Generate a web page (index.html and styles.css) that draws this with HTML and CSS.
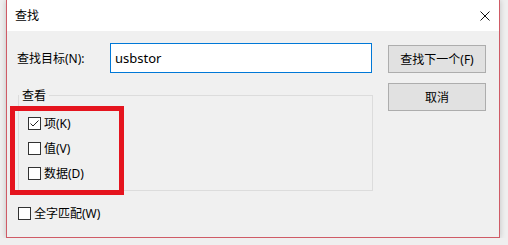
FILE: index.html
```html
<!DOCTYPE html>
<html lang="zh-CN">
<head>
    <meta charset="UTF-8">
    <title>查找</title>
    <link rel="stylesheet" href="styles.css">
</head>
<body>
    <div class="window">
        <div class="titlebar">
            <span class="title">查找</span>
            <button class="close" aria-label="关闭">
                <svg width="10" height="10" viewBox="0 0 10 10">
                    <path d="M0.5 0.5 L9.5 9.5 M9.5 0.5 L0.5 9.5" stroke="#111" stroke-width="1" fill="none"/>
                </svg>
            </button>
        </div>

        <div class="content">
            <div class="main">
                <div class="field-row">
                    <label class="field-label" for="target">查找目标(N):</label>
                    <input class="field-input" id="target" type="text" value="usbstor">
                </div>

                <!-- 查看 group -->
                <fieldset class="group">
                    <legend>查看</legend>
                    <div class="checks">
                        <label class="check">
                            <span class="box">
                                <svg width="11" height="11" viewBox="0 0 11 11">
                                    <path d="M1.5 5.5 L4 8 L9.5 2.5" stroke="#222" stroke-width="1" fill="none"/>
                                </svg>
                            </span>项(K)
                        </label>
                        <label class="check"><span class="box"></span>值(V)</label>
                        <label class="check"><span class="box"></span>数据(D)</label>
                    </div>
                </fieldset>

                <label class="check whole"><span class="box"></span>全字匹配(W)</label>
            </div>

            <div class="actions">
                <button class="btn">查找下一个(F)</button>
                <button class="btn">取消</button>
            </div>
        </div>

        <!-- annotation box drawn over the dialog -->
        <div class="highlight"></div>
    </div>
</body>
</html>
```

FILE: styles.css
```css
body {
    margin: 0;
    background-color: #efefef;
    font-family: "Noto Sans", "Noto Sans CJK SC", sans-serif;
    font-size: 12px;
    color: #000;
}
.window {
    position: relative;
    box-sizing: border-box;
    width: 494px;
    height: 238px;
    margin-left: 6px;
    background-color: #f0f0f0;
    border: 1px solid #cf5b66;
    border-top: none;
    box-shadow: 0 0 6px rgba(0, 0, 0, 0.2);
}
.titlebar {
    display: flex;
    align-items: center;
    height: 31px;
    padding-left: 8px;
    background-color: #fff;
}
.title {
    line-height: 17px;
}
.close {
    display: flex;
    margin-left: auto;
    margin-right: 9px;
    padding: 0;
    border: none;
    background: none;
}
.content {
    display: flex;
    padding: 12px 0 0 10px;
}
.main {
    width: 356px;
}
.field-row {
    display: flex;
    align-items: center;
    height: 30px;
}
.field-label {
    width: 93px;
    line-height: 17px;
}
.field-input {
    box-sizing: border-box;
    width: 262px;
    height: 30px;
    padding: 0 4px;
    border: 1px solid #0078d7;
    outline: none;
    font-family: inherit;
    font-size: 13px;
    color: #000;
}
.group {
    margin: 14px 0 0 1px;
    padding: 0;
    width: 355px;
    box-sizing: border-box;
    border: 1px solid #dcdcdc;
}
.group legend {
    padding: 0 3px;
    margin-left: 0;
    line-height: 17px;
}
.checks {
    display: flex;
    flex-direction: column;
    padding: 7px 0 4px 9px;
}
.check {
    display: flex;
    align-items: center;
    height: 25px;
    line-height: 17px;
}
.box {
    display: flex;
    align-items: center;
    justify-content: center;
    box-sizing: border-box;
    width: 13px;
    height: 13px;
    margin-right: 3px;
    background-color: #fff;
    border: 1px solid #333;
}
.whole {
    height: 17px;
    margin: 14px 0 0 1px;
}
.actions {
    display: flex;
    flex-direction: column;
    gap: 10px;
    margin-left: 15px;
    padding-top: 2px;
}
.btn {
    box-sizing: border-box;
    width: 98px;
    height: 28px;
    padding: 0;
    background-color: #e1e1e1;
    border: 1px solid #adadad;
    font-family: inherit;
    font-size: 12px;
    color: #000;
}
.highlight {
    position: absolute;
    left: 3px;
    top: 106px;
    width: 114px;
    height: 89px;
    box-sizing: border-box;
    border: 5px solid #e5141e;
}
```
